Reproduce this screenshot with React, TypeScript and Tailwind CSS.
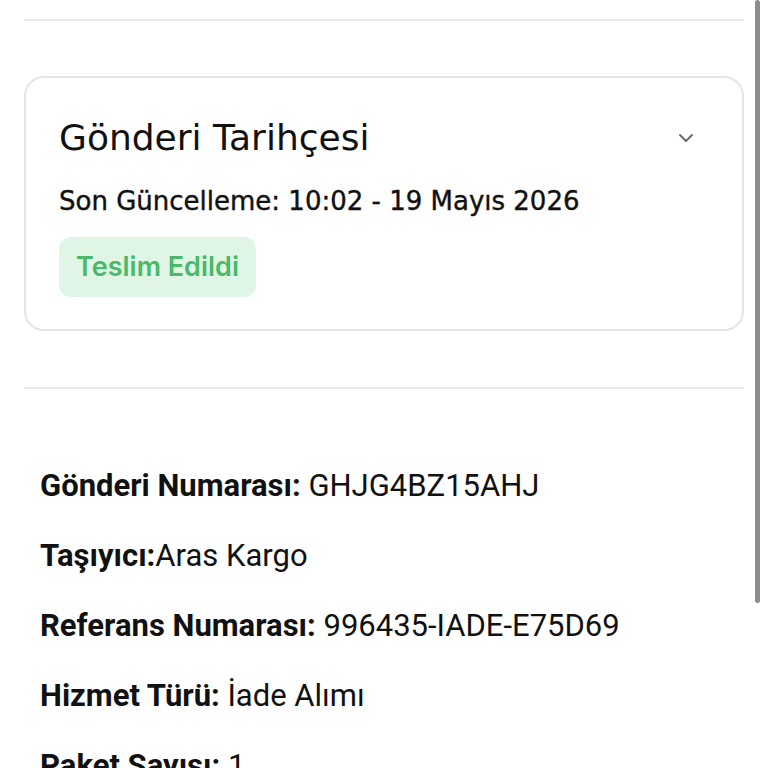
import React from 'react';
import { ChevronDown } from 'lucide-react';

const rows = [
  { label: 'Gönderi Numarası:', value: ' GHJG4BZ15AHJ' },
  { label: 'Taşıyıcı:', value: 'Aras Kargo' },
  { label: 'Referans Numarası:', value: ' 996435-IADE-E75D69' },
  { label: 'Hizmet Türü:', value: ' İade Alımı' },
  { label: 'Paket Sayısı:', value: ' 1' },
];

const App = () => {
  return (
    <div className="relative w-[768px] h-[768px] overflow-hidden bg-white">
      <div className="px-6">
        <div className="pt-[19px]">
          <div className="h-[2px] bg-[#e8e8ea]" />
        </div>

        <div className="mt-[55px] rounded-[20px] border-2 border-[#e5e5e8] pl-[33px] pr-[44px] pt-[40px] pb-[32px]">
          <div className="flex items-start justify-between">
            <h2 className="text-[36px] leading-[40px] text-[#111111]" style={{ fontFamily: '"DejaVu Sans", sans-serif' }}>
              Gönderi Tarihçesi
            </h2>
            <ChevronDown className="mt-[8px] w-6 h-6 text-[#6b6b6b]" strokeWidth={2} />
          </div>
          <p className="mt-[27px] text-[26px] leading-[32px] text-[#111111] [-webkit-text-stroke:0.4px_#111111]" style={{ fontFamily: '"DejaVu Sans", sans-serif' }}>
            Son Güncelleme: 10:02 - 19 Mayıs 2026
          </p>
          <div className="mt-[20px] inline-flex items-center h-[60px] px-[17px] rounded-[12px] bg-[#dff6e5]">
            <span className="text-[27px] font-semibold text-[#4cb86a]" style={{ fontFamily: 'Inter, sans-serif' }}>
              Teslim Edildi
            </span>
          </div>
        </div>

        <div className="mt-[56px] h-[2px] bg-[#e8e8ea]" />

        <div className="px-4 pt-[78px] flex flex-col gap-[32px]" style={{ fontFamily: 'Roboto, sans-serif' }}>
          {rows.map((r) => (
            <div key={r.label} className="text-[31px] leading-[38px] text-[#111111] whitespace-pre">
              <span className="font-bold">{r.label}</span>
              <span>{r.value}</span>
            </div>
          ))}
        </div>
      </div>

      <div className="absolute right-[8px] top-0 w-[5px] h-[603px] rounded-full bg-[#8c8c8c]" />
    </div>
  );
};

export default App;
